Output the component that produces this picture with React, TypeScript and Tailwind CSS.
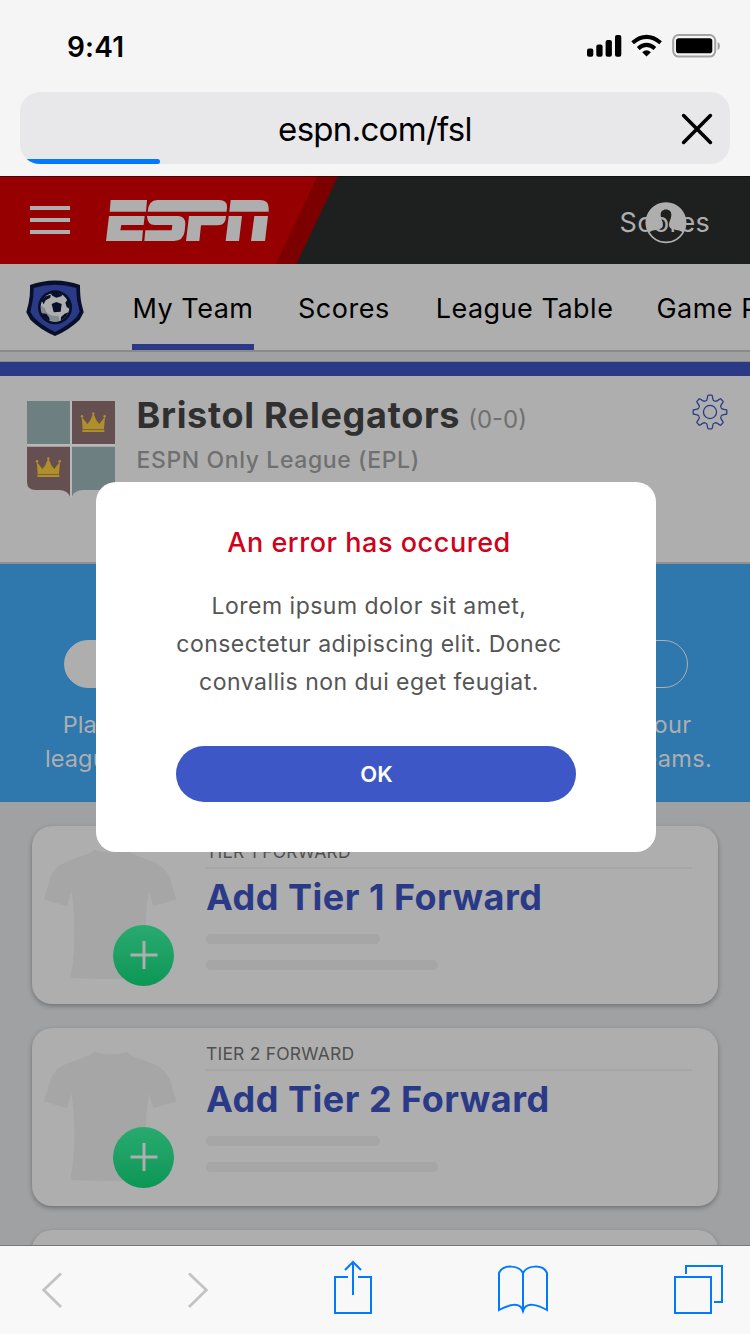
import React from "react";

function StatusIcons() {
  return (
    <svg className="h-6 w-[135px]" viewBox="0 0 135 24">
      <rect x="1" y="14.5" width="6.3" height="8.3" rx="2" />
      <rect x="10.3" y="10.5" width="6.3" height="12.3" rx="2" />
      <rect x="19.6" y="6" width="6.3" height="16.8" rx="2" />
      <rect x="29" y="1" width="6.3" height="21.8" rx="2" />
      <g fill="none" stroke="#000" strokeWidth="4">
        <path d="M46.600 8.800Q60.500 -3 74.600 8.800" />
        <path d="M52.200 14.400Q60.500 7.200 68.900 14.400" />
      </g>
      <path d="M56.200 18.200Q60.500 14.500 64.900 18.200L60.500 22.600Z" />
      <rect x="87.2" y="1" width="42" height="21.6" rx="5.5" fill="none" stroke="#a2a2a2" strokeWidth="2" />
      <rect x="90" y="4.200" width="36.300" height="15" rx="2.800" />
      <path d="M131.600 8V16Q134 15 134 12T131.600 8Z" fill="#a2a2a2" />
    </svg>
  );
}

function EspnLogo() {
  return (
    <svg className="ml-9 h-[41px] w-[163px]" viewBox="318 90 489 123" fill="#aeaeae">
      <path d="M332 90H441L438 125H329Z" />
      <path d="M327 138H434L431 165H364L361 181H429L426 213H318Z" />
      <path d="M472 90H658Q681 90 681 110L680 125H443Q446 90 472 90Z" />
      <path d="M441 138H533Q556 138 556 162L554 184Q550 213 522 213H433L436 181H515L517 165H464Q442 165 441 138Z" />
      <path d="M567 138H678Q678 166 653 166H603L598 213H558Z" />
      <path d="M692 90H780Q806 90 806 113V125H688Z" />
      <path d="M686 138H726L717 213H677Z" />
      <path d="M763 138H804L795 213H753Z" />
    </svg>
  );
}

function Avatar() {
  return (
    <svg className="absolute left-[645px] top-[25px] h-[43px] w-[42px]" viewBox="0 0 42 43">
      <path
        fill="#aeaeae"
        fillRule="evenodd"
        d="M21 1.200A20.500 20.500 0 1 1 20.900 1.200ZM21 8.600C17 8.600 15.400 11.500 15.700 14.500C15.900 17.500 17.200 19.500 17.700 21.500C18.200 24.500 18 26.500 16 27.500C13 29 9 28.500 4.600 31A18.900 18.900 0 0 0 37.400 31C33 28.500 29 29 26 27.500C24 26.500 23.800 24.500 24.300 21.500C24.800 19.500 26.100 17.500 26.300 14.500C26.600 11.500 25 8.600 21 8.600Z"
      />
    </svg>
  );
}

function LeagueBadge() {
  return (
    <svg className="ml-[26px] mt-0.5 h-[56px] w-[58px] shrink-0" viewBox="78 329 174 168">
      <path
        d="M90 344Q165 317 240 344Q240 378 244 397L251 426L239 448Q210 477 165 497Q120 477 91 448L79 426L86 397Q91 375 90 344Z"
        fill="#080f2b"
      />
      <path
        d="M101 353Q165 334 229 353Q229 382 234 402L239 424L229 441Q202 468 165 485Q128 468 101 441L91 424L96 402Q101 380 101 353Z"
        fill="#2a3a87"
      />
      <circle cx="165" cy="411" r="51" fill="#080f2b" />
      <circle cx="165" cy="411" r="43" fill="#aeaeae" />
      <path d="M123 406A43 43 0 0 0 179 451L175 437Q140 440 134 413Z" fill="#858c90" />
      <g fill="#080f2b">
        <path d="M155 401L169 395L185 401L182 424L161 426Z" />
        <path d="M151 368Q166 362 187 373L184 378L169 382L157 376Z" />
        <path d="M125 391Q135 375 152 373L151 382L137 390L131 402Z" />
        <path d="M204 386Q211 401 209 416L200 410L196 397Z" />
        <path d="M205 426Q199 443 182 451L183 440L194 430Z" />
        <path d="M125 429L139 430L148 442L149 452Q131 444 125 429Z" />
      </g>
    </svg>
  );
}

function Crown({ x, y }: { x: number; y: number }) {
  return (
    <g transform={`translate(${x} ${y})`} fill="#ae8f2c">
      <path d="M3 14L8 20L20 36L28 26L38 4L48 26L56 36L68 20L73 14L70 51H6Z" />
      <path d="M5 53H71V60H5Z" />
      <circle cx="4" cy="13" r="3.8" />
      <circle cx="38" cy="4.500" r="3.8" />
      <circle cx="72" cy="13" r="3.8" />
      <path d="M6 51H70V53H6Z" fill="#806431" />
    </g>
  );
}

function Crest() {
  return (
    <svg className="ml-[27px] mt-[25px] h-24 w-[88px] shrink-0" viewBox="81 183 264 288">
      <path d="M81 183H345V425Q345 450 321 450H250Q225 450 216 471H210Q203 450 178 450H105Q81 450 81 425Z" fill="#b8b8b8" />
      <path d="M81 183H210V312H81Z" fill="#6d7f81" />
      <path d="M216 183H345V312H216Z" fill="#654f50" />
      <path d="M81 320H210V470Q202 450 178 450H107Q81 450 81 426Z" fill="#654f50" />
      <path d="M216 320H345V426Q345 450 319 450H249Q224 450 216 470Z" fill="#6d7f81" />
      <Crown x={242} y={216} />
      <Crown x={107} y={351} />
    </svg>
  );
}

const TOOTH_ANGLES = [0, 45, 90, 135, 180, 225, 270, 315];

function Gear() {
  return (
    <svg className="ml-auto mr-[22px] mt-[18px] h-9 w-9" viewBox="-18.400 -18.400 36.800 36.800" fill="none" stroke="#2a3a87" strokeWidth="1.300">
      <circle r="6.700" />
      {TOOTH_ANGLES.map((a) => (
        <path
          key={a}
          transform={`rotate(${a})`}
          d="M-4.8 -11.6C-3.6 -11.3 -3.1 -12.3 -3 -13.1L-2.300 -16.600Q-2.200 -17.200 -1.500 -17.200H1.500Q2.200 -17.200 2.300 -16.600L3 -13.1C3.1 -12.3 3.6 -11.3 4.8 -11.6"
        />
      ))}
    </svg>
  );
}

function PlayerCard({ tier }: { tier: number }) {
  return (
    <div className="flex h-[178px] shrink-0 rounded-[20px] bg-[#aeaeae] shadow-[0_2px_5px_rgba(0,0,0,0.3)]">
      <div className="relative ml-3 mt-[23px] h-[131px] w-[133px] shrink-0">
        <svg className="h-full w-full" viewBox="133 88 399 393" fill="#a6a6a6">
          <path d="M282 90Q330 106 383 92Q387 98 401 104L462 127Q496 142 510 173L530 239L461 260L448 215Q437 270 439 330Q440 400 448 474Q340 481 216 475L213 468Q226 400 224 320Q223 260 215 215L202 260L133 239L153 173Q165 143 193 130L262 103Q278 98 282 90Z" />
        </svg>
        <div className="absolute left-[69px] top-[75.500px] flex h-[61px] w-[61px] items-center justify-center rounded-full bg-linear-to-b from-[#29aa70] to-[#0a9756]">
          <svg className="h-7 w-7" viewBox="0 0 28 28" stroke="#aeaeae" strokeWidth="3">
            <path d="M14 0V28M.5 14H27.5" />
          </svg>
        </div>
      </div>
      <div className="ml-7 w-[487px]">
        <div className="ml-px h-[41px] pt-4 text-[17.500px] leading-5 tracking-[0.200px] text-[#505050]">TIER {tier} FORWARD</div>
        <div className="h-0.5 bg-[#a6a6a6]" />
        <div className="ml-px mt-1.5 text-[36px] font-bold leading-[44px] tracking-[0.500px] whitespace-nowrap text-[#2a3a87]">
          Add Tier {tier} Forward
        </div>
        <div className="ml-px mt-[15px] h-2.5 w-[174px] rounded-full bg-[#a6a6a6]" />
        <div className="ml-px mt-4 h-2.5 w-[232px] rounded-full bg-[#a6a6a6]" />
      </div>
    </div>
  );
}

export default function App() {
  return (
    <div
      className="flex h-[1334px] w-[750px] flex-col overflow-hidden bg-[#f5f5f5] text-black"
      style={{ fontFamily: 'Inter, "Liberation Sans", sans-serif' }}
    >
      <header className="h-44 shrink-0 bg-[#f5f5f5]">
        <div className="flex h-[92px] items-start justify-between pl-[67px] pr-[29px]">
          <span className="mt-[30px] text-[28px] font-semibold leading-[34px] tracking-[0.200px]">9:41</span>
          <div className="mt-[34px]">
            <StatusIcons />
          </div>
        </div>
        <div className="relative mx-5 flex h-[72px] items-center justify-center overflow-hidden rounded-[20px] bg-[#e8e8ea]">
          <span className="mt-px text-[33px] leading-10 tracking-[-0.700px]">espn.com/fsl</span>
          <svg className="absolute right-[17px] top-[21px] h-8 w-8" viewBox="0 0 32 32" stroke="#000" strokeWidth="3.600" strokeLinecap="round">
            <path d="M2.600 2.600L29.400 29.400M29.400 2.600L2.600 29.400" />
          </svg>
          <div className="absolute bottom-0 left-0 h-[5px] w-[140px] rounded-r-[3px] bg-[#007aff]" />
        </div>
      </header>

      <main className="relative flex min-h-0 flex-1 flex-col overflow-hidden bg-[#9fa1a3]">
        <div className="relative flex h-[88px] shrink-0 items-center bg-[#1e201f]">
          <svg className="absolute left-0 top-0 h-[88px] w-[338px]" viewBox="0 0 338 88">
            <path d="M0 0H338L296.500 88H0Z" fill="#7d0000" />
            <path d="M0 0H317.500L276 88H0Z" fill="#960000" />
          </svg>
          <div className="relative ml-[30px] flex w-10 flex-col gap-2">
            <div className="h-1 bg-[#aeaeae]" />
            <div className="h-1 bg-[#aeaeae]" />
            <div className="h-1 bg-[#aeaeae]" />
          </div>
          <div className="relative">
            <EspnLogo />
          </div>
          <span className="ml-auto mr-10 mt-1.5 text-[27px] leading-8 tracking-[0.300px] text-[#aeaeae]">Scores</span>
          <Avatar />
          <div className="absolute inset-x-0 top-0 h-px bg-black/50" />
        </div>

        <nav className="flex h-[88px] shrink-0 items-center overflow-hidden border-b-2 border-[#8a8a8a] bg-[#aeaeae] text-[27px] tracking-[0.500px]">
          <LeagueBadge />
          <div className="ml-12 flex h-full w-[122px] shrink-0 items-center justify-center whitespace-nowrap border-b-[6px] border-[#2a3a87] pt-2.5">My Team</div>
          <span className="ml-11 mt-1 whitespace-nowrap">Scores</span>
          <span className="ml-[46px] mt-1 whitespace-nowrap">League Table</span>
          <span className="ml-[43px] mt-1 whitespace-nowrap">Game Play</span>
        </nav>
        <div className="h-2.5 shrink-0 border-b border-[#8a8a8a]" />
        <div className="h-3.5 shrink-0 bg-[#2a3a87]" />

        <section className="flex h-[188px] shrink-0 items-start border-b-2 border-[#929292] bg-[#aeaeae]">
          <Crest />
          <div className="ml-[21.500px]">
            <div className="mt-4 flex items-baseline whitespace-nowrap">
              <span className="text-[36px] font-bold leading-[46px] tracking-[0.700px] text-[#303030]">Bristol Relegators</span>
              <span className="ml-2 text-[24px] text-[#707070]">(0-0)</span>
            </div>
            <div className="mt-1.5 text-[23px] font-medium leading-8 tracking-[0.600px] whitespace-nowrap text-[#707070]">ESPN Only League (EPL)</div>
          </div>
          <Gear />
        </section>

        <section className="h-[238px] shrink-0 bg-[#2f78ae] px-[45px] pt-[76px] text-[#aeaeae]">
          <div className="ml-[19px] flex h-12 w-[624px] rounded-full border border-[#aeaeae] bg-linear-to-r from-[#aeaeae] from-33% to-transparent to-33%" />
          <div className="mt-5 flex justify-between text-center text-[23.500px] leading-[34px] tracking-[0.100px] whitespace-nowrap">
            <div>Play in a<br />league with</div>
            <div className="mr-[-7px] tracking-[0.300px]">Draft your<br />dream teams.</div>
          </div>
        </section>

        <section className="flex flex-col gap-6 px-8 pt-6">
          <PlayerCard tier={1} />
          <PlayerCard tier={2} />
          <PlayerCard tier={3} />
        </section>

        <div role="dialog" className="absolute left-24 top-[306px] flex h-[370px] w-[560px] flex-col items-center rounded-[20px] bg-white text-center">
          <h2 className="ml-[-14px] mt-[43px] text-[27px] font-medium leading-9 tracking-[0.550px] whitespace-nowrap text-[#d0021b]">An error has occured</h2>
          <p className="ml-[-14px] mt-[26px] text-[23px] leading-[38px] tracking-[0.480px] whitespace-nowrap text-[#555]">
            Lorem ipsum dolor sit amet,<br />consectetur adipiscing elit. Donec<br />convallis non dui eget feugiat.
          </p>
          <button className="mt-[45px] h-14 w-[400px] rounded-full bg-[#3d57c6] pl-px text-[22px] font-semibold text-white">OK</button>
        </div>
      </main>

      <footer className="flex h-[89px] shrink-0 items-start border-t border-[#777] bg-[#f8f8f8]">
        <svg className="h-[88px] w-[750px]" viewBox="0 0 750 88" fill="none" stroke="#007aff" strokeWidth="2">
          <g stroke="#c3c3c3" strokeWidth="2.800">
            <path d="M61 27.500L43.700 44L61 61" />
            <path d="M189 27.500L206.300 44L189 61" />
          </g>
          <path d="M348 31H335V67H371V31H358" />
          <path d="M353 49V16M345 24L353 16L361 24" />
          <path d="M523 66V27C519 19 503 18 499 27V64C508 59 520 55 523 65C526 55 538 59 547 64V27C543 18 527 19 523 27" />
          <path d="M675 31H711V67H675Z" />
          <path d="M686 28V20H722V56H714" />
        </svg>
      </footer>
    </div>
  );
}
